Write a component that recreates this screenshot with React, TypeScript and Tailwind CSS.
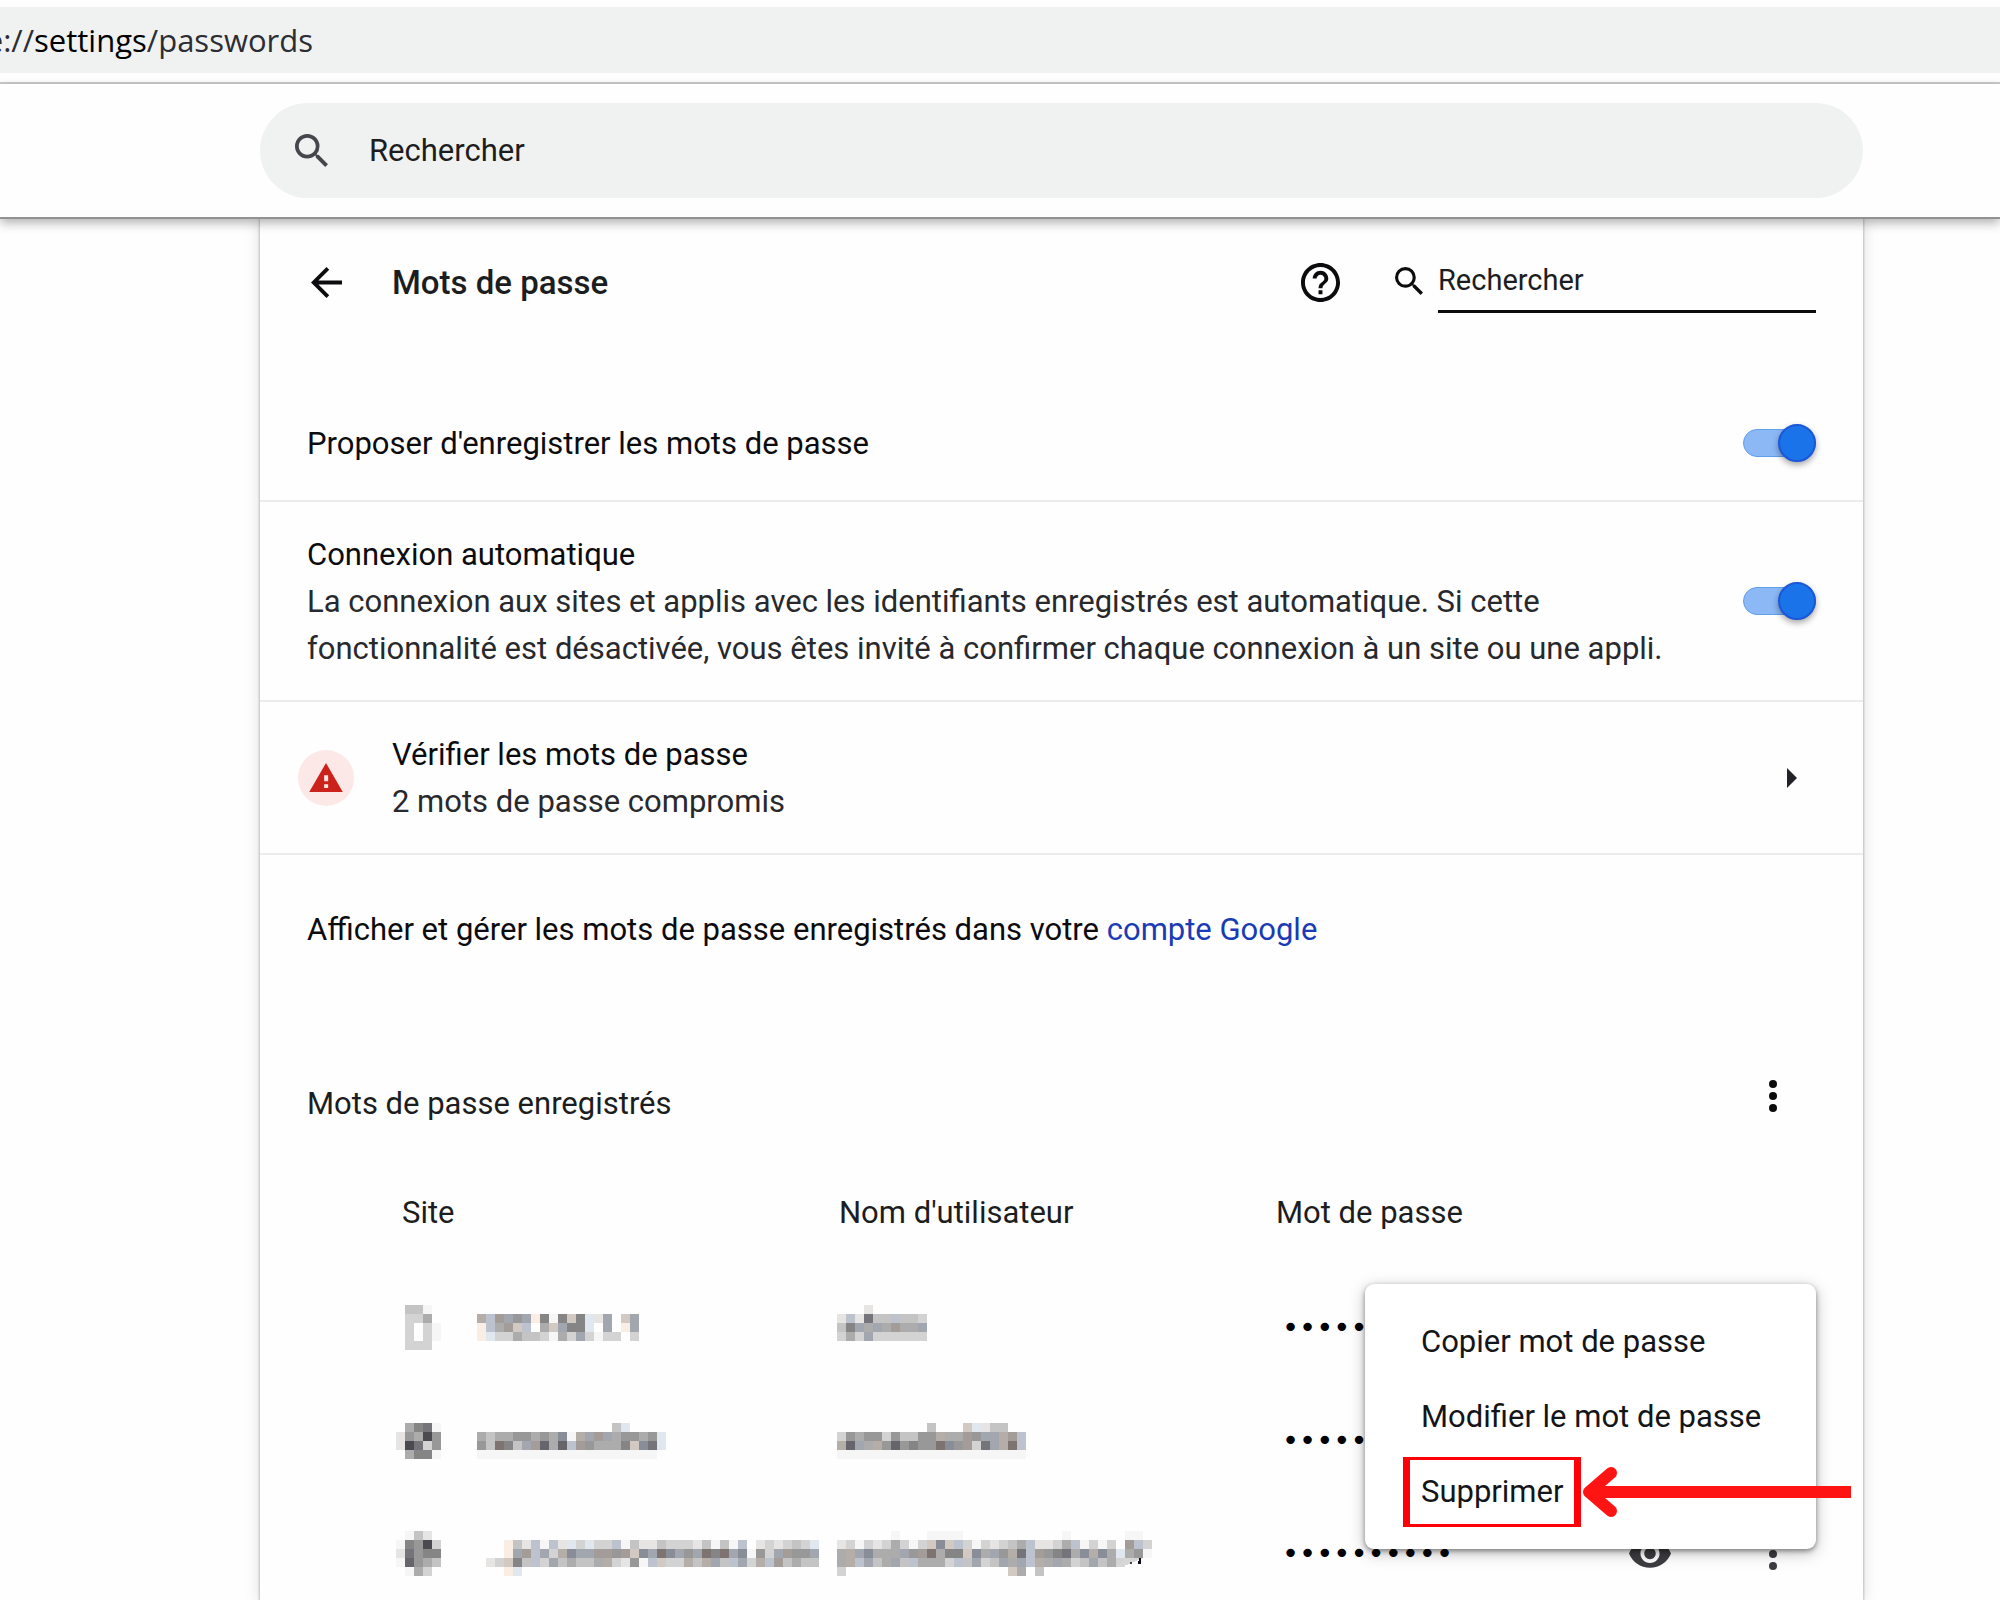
import { useState } from "react";
import type { ReactNode } from "react";

const CELL = 9;

const SHADES: Record<string, string> = {
  a: "#f6f6f6",
  b: "#e6e5e4",
  c: "#d3d3d4",
  d: "#c4c4c5",
  e: "#adacac",
  f: "#989898",
  g: "#858586",
  h: "#74747a",
  i: "#65656b",
  j: "#4a4a50",
  p: "#faeee4",
  q: "#d2c9c3",
  r: "#a39c98",
  s: "#7d7370",
  t: "#b5aea8",
  u: "#e0e7ef",
  v: "#bcc2ce",
  w: "#a2a6ae",
  x: "#898d97",
};

const entries = [
  {
    icon: [".dda.", ".cce.", ".c.ca", ".c.ca", ".ccc."],
    site: ["tvrwfwpgagqgubw.qw", "pverqv.eqwggu.w.pw", "pucceddcaecwcacc.c"],
    user: ["...b......", "bvbhddvddc", "dgwewereew", "cecwcccccc", ".........."],
  },
  {
    icon: [".egha", "bfejf", "bjhcf", ".egga"],
    site: ["...............du....", "edeeffefexatwrweffefu", "fdsgdwrieivrfeeegqxhu", "aaaaaaaaaaaaaaaaaaaa."],
    user: ["..........d...qubdd..", "cfeffcfddffteerfwwtrv", "tiwetfifgffsxfrchwtsv", "aaaaaaaaaaaaaaaaaaaaa"],
  },
  {
    icon: [".adb.", "agfjc", "bhfgg", "aifed", ".aec."],
    site: [
      "......................................",
      "...pdbvavbucuccvadbbdcccbdadav.bcbcdcu",
      "...pwrvwctxwwrrfrqxwsxwfwsgswxafcwrffw",
      ".bcqgdvcwdeddetcbfavqcctdtwdvwctvrdedd",
      "...pu.................................",
    ],
    user: [
      "......a...aaaa...........a......aa.",
      "bcacbcecacqxqvcacbcdevbbcevacac.rvc",
      "etwxeeewfrseggqxewfthvrfghextxeuefa",
      "etvwdewdveeecvdwcdwewvtewecdwdec...",
      "c..................qe.d............",
    ],
    stroke: true,
  },
];

function Mosaic({ rows, children }: { rows: string[]; children?: ReactNode }) {
  const width = rows[0].length * CELL;
  const height = rows.length * CELL;
  return (
    <svg width={width} height={height} shapeRendering="crispEdges" className="block shrink-0" aria-hidden="true">
      {rows.flatMap((row, y) =>
        row
          .split("")
          .map((c, x) =>
            c === "." ? null : (
              <rect key={`${x}-${y}`} x={x * CELL} y={y * CELL} width={CELL} height={CELL} fill={SHADES[c]} />
            )
          )
      )}
      {children}
    </svg>
  );
}

function SearchIcon({ className }: { className: string }) {
  return (
    <svg viewBox="3 3 17.5 17.5" className={className} fill="currentColor" aria-hidden="true">
      <path d="M15.5 14h-.79l-.28-.27A6.471 6.471 0 0 0 16 9.5 6.5 6.5 0 1 0 9.5 16c1.61 0 3.09-.59 4.23-1.57l.27.28v.79l5 4.99L20.49 19l-4.99-5zm-6 0C7.01 14 5 11.99 5 9.5S7.01 5 9.5 5 14 7.01 14 9.5 11.99 14 9.5 14z" />
    </svg>
  );
}

function KebabIcon() {
  return (
    <svg viewBox="0 0 10 34" className="h-[34px] w-[10px]" fill="currentColor" aria-hidden="true">
      <circle cx="5" cy="5" r="4" />
      <circle cx="5" cy="17" r="4" />
      <circle cx="5" cy="29" r="4" />
    </svg>
  );
}

function Toggle({ id }: { id: string }) {
  const [on, setOn] = useState(true);
  return (
    <span className="relative flex h-[38px] w-[73px] shrink-0 items-center">
      <input
        id={id}
        type="checkbox"
        role="switch"
        checked={on}
        onChange={() => setOn(!on)}
        className="peer h-7 w-full cursor-pointer appearance-none rounded-full border border-[#5f9ff0] bg-[#8cb8f5]"
      />
      <span className="pointer-events-none absolute left-0 size-[38px] rounded-full border-2 border-[#1b57d8] bg-[#1a73e8] shadow-[0_3px_6px_rgba(0,0,0,0.35)] peer-checked:left-[35px]" />
    </span>
  );
}

function PasswordRow({ entry, index }: { entry: (typeof entries)[number]; index: number }) {
  return (
    <tr className="h-[113px]">
      <td className="p-0">
        <div className="flex items-center gap-9">
          <Mosaic rows={entry.icon} />
          <Mosaic rows={entry.site} />
        </div>
      </td>
      <td className="p-0">
        <Mosaic rows={entry.user}>
          {entry.stroke && (
            <>
              <path d="M279 36 L288 27 H306 L285 36 Z" fill="#d6d6d6" />
              <path d="M302 27 H304 V33 H301 Z" fill="#0b0b1c" />
              <path d="M293 31 H295 V33 H293 Z" fill="#4a3550" />
            </>
          )}
        </Mosaic>
      </td>
      <td className="p-0">
        <input
          type="password"
          readOnly
          value="motdepasse"
          aria-label={`Mot de passe ${index + 1}`}
          className="block w-full bg-transparent pl-2 font-['DejaVu_Sans',sans-serif] text-[29px] leading-[47px] text-black outline-none"
        />
      </td>
      <td className="p-0">
        <div className="flex items-center justify-end gap-[97px] pr-[38px] text-[#3c3c41]">
          <button type="button" aria-label="Afficher le mot de passe">
            <svg viewBox="1 4.5 22 15" className="h-[29px] w-[42px]" fill="currentColor" aria-hidden="true">
              <path d="M12 4.5C7 4.5 2.73 7.61 1 12c1.73 4.39 6 7.5 11 7.5s9.27-3.11 11-7.5c-1.73-4.39-6-7.5-11-7.5zM12 17c-2.76 0-5-2.24-5-5s2.24-5 5-5 5 2.24 5 5-2.24 5-5 5zm0-8c-1.66 0-3 1.34-3 3s1.34 3 3 3 3-1.34 3-3-1.34-3-3-3z" />
            </svg>
          </button>
          <button type="button" aria-label="Autres actions">
            <KebabIcon />
          </button>
        </div>
      </td>
    </tr>
  );
}

function ActionMenu() {
  return (
    <div
      role="menu"
      className="absolute top-[13px] right-0 w-[451px] rounded-[9px] bg-white py-5 text-[31px] leading-[75px] text-[#141518] shadow-[0_2px_5px_rgba(0,0,0,0.4),0_4px_16px_rgba(0,0,0,0.25)]"
    >
      <button type="button" role="menuitem" className="block w-full pl-14 text-left">
        Copier mot de passe
      </button>
      <button type="button" role="menuitem" className="block w-full pl-14 text-left">
        Modifier le mot de passe
      </button>
      <div className="relative">
        <button type="button" role="menuitem" className="block w-full pl-14 text-left">
          Supprimer
        </button>
        <span className="pointer-events-none absolute top-[3px] left-[38px] h-[70px] w-[178px] border-x-[7px] border-y-[3px] border-[#ff0008]" />
        <svg
          viewBox="0 0 272 50"
          className="pointer-events-none absolute top-[13px] left-[214px] h-[50px] w-[272px]"
          fill="none"
          stroke="#ff1414"
          strokeWidth="12"
          aria-hidden="true"
        >
          <path d="M10 25H272" />
          <path d="M32 6L10 25L32 44" strokeLinecap="round" strokeLinejoin="round" />
        </svg>
      </div>
    </div>
  );
}

export default function App() {
  return (
    <div className="flex h-screen flex-col overflow-hidden bg-[#fefefe] font-['Roboto','Liberation_Sans',sans-serif] text-[31px] leading-[47px] text-[#0c0c0e]">
      <div className="border-b-2 border-[#cacaca] bg-[#fefefe] pt-[7px] pb-[9px]">
        <div className="h-[66px] bg-[#f0f2f1]">
          <div className="flex w-[313px] justify-end overflow-hidden font-['Open_Sans','Noto_Sans',sans-serif] text-[31px] leading-[66px] whitespace-nowrap text-[#2c2d33]">
            e://<span className="text-black">settings</span>/passwords
          </div>
        </div>
      </div>

      <header className="relative z-10 border-b-2 border-[#929292] bg-[#fefefe] pt-[19px] pr-[137px] pb-[19px] pl-[260px] shadow-[0_4px_10px_rgba(0,0,0,0.3)]">
        <label className="flex h-[95px] items-center gap-[41px] rounded-full bg-[#f0f2f1] pl-[35px]">
          <SearchIcon className="size-[33px] text-[#46474c]" />
          <input
            type="text"
            placeholder="Rechercher"
            aria-label="Rechercher dans les paramètres"
            className="min-w-0 flex-1 bg-transparent outline-none placeholder:text-[#1c1d20] placeholder:opacity-100"
          />
        </label>
      </header>

      <main className="flex flex-1 flex-col pr-[137px] pl-[260px]">
        <div className="flex-1 bg-[#fefefe] shadow-[0_0_2px_1px_rgba(0,0,0,0.2),0_0_14px_2px_rgba(0,0,0,0.1)]">
          <div className="flex h-[169px] items-start px-[47px] pt-10">
            <button type="button" aria-label="Retour" className="mt-2 ml-1">
              <svg viewBox="4 4 16 16" className="size-[31px]" fill="currentColor" aria-hidden="true">
                <path d="M20 11H7.83l5.59-5.59L12 4l-8 8 8 8 1.41-1.41L7.83 13H20v-2z" />
              </svg>
            </button>
            <h1 className="ml-[50px] flex-1 text-[33px] leading-[47px] font-medium text-[#1c1d20]">Mots de passe</h1>
            <button type="button" aria-label="Aide" className="mt-1">
              <svg viewBox="2 2 20 20" className="size-[39px]" fill="currentColor" aria-hidden="true">
                <path d="M11 18h2v-2h-2v2zm1-16C6.48 2 2 6.48 2 12s4.48 10 10 10 10-4.48 10-10S17.52 2 12 2zm0 18c-4.41 0-8-3.59-8-8s3.59-8 8-8 8 3.59 8 8-3.59 8-8 8zm0-14c-2.21 0-4 1.79-4 4h2c0-1.1.9-2 2-2s2 .9 2 2c0 2-3 1.75-3 5h2c0-2.25 3-2.5 3-5 0-2.21-1.79-4-4-4z" />
              </svg>
            </button>
            <label className="ml-[55px] flex items-start">
              <SearchIcon className="mt-2 mr-[15px] size-7" />
              <input
                type="text"
                placeholder="Rechercher"
                aria-label="Rechercher des mots de passe"
                className="h-[54px] w-[378px] border-b-[3px] border-[#0c0c0e] bg-transparent pb-[9px] text-[29px] leading-[42px] outline-none placeholder:text-[#1c1d20] placeholder:opacity-100"
              />
            </label>
          </div>

          <div className="flex h-[114px] items-center justify-between border-b-2 border-[#ececec] px-[47px] pb-[2px]">
            <label htmlFor="offer">Proposer d'enregistrer les mots de passe</label>
            <Toggle id="offer" />
          </div>

          <div className="flex h-[200px] items-center justify-between border-b-2 border-[#ececec] px-[47px]">
            <div>
              <label htmlFor="auto">Connexion automatique</label>
              <p className="text-[#28292d]">
                La connexion aux sites et applis avec les identifiants enregistrés est automatique. Si cette
                <br />
                fonctionnalité est désactivée, vous êtes invité à confirmer chaque connexion à un site ou une appli.
              </p>
            </div>
            <Toggle id="auto" />
          </div>

          <a href="#check" className="flex h-[153px] items-center border-b-2 border-[#ececec] pr-[66px] pl-[38px]">
            <span className="flex size-14 items-center justify-center rounded-full bg-[#fce8e6]">
              <svg viewBox="1 2 22 19" className="h-[29px] w-[34px]" aria-hidden="true">
                <path d="M1 21h22L12 2 1 21z" fill="#cb221b" />
                <path d="M10.8 10h2.6v4h-2.6zM10.8 16h2.6v2.4h-2.6z" fill="#fce8e6" />
              </svg>
            </span>
            <span className="ml-[38px] flex-1">
              <span className="block">Vérifier les mots de passe</span>
              <span className="block text-[#28292d]">2 mots de passe compromis</span>
            </span>
            <svg viewBox="0 0 10 20" className="h-5 w-[10px]" fill="#232327" aria-hidden="true">
              <path d="M0 0L10 10L0 20Z" />
            </svg>
          </a>

          <p className="px-[47px] pt-[51px]">
            Afficher et gérer les mots de passe enregistrés dans votre{" "}
            <a href="#account" className="text-[#1a3bb5]">
              compte Google
            </a>
          </p>

          <div className="flex items-center justify-between pt-[127px] pr-[85px] pl-[47px]">
            <h2 className="text-[#1c1d20]">Mots de passe enregistrés</h2>
            <button type="button" aria-label="Autres actions sur les mots de passe" className="-mt-4">
              <KebabIcon />
            </button>
          </div>

          <div className="pt-[27px] pr-[47px] pl-[136px]">
            <table className="w-full table-fixed border-collapse text-left">
              <thead>
                <tr className="h-[117px] text-[#1c1d20]">
                  <th className="w-[441px] p-0 pl-1.5 font-normal">Site</th>
                  <th className="w-[437px] p-0 pl-0.5 font-normal">Nom d'utilisateur</th>
                  <th className="p-0 pl-0.5 font-normal">Mot de passe</th>
                  <td className="w-[240px] p-0" />
                </tr>
              </thead>
              <tbody>
                {entries.map((entry, i) => (
                  <PasswordRow key={i} entry={entry} index={i} />
                ))}
              </tbody>
            </table>
            {/* the menu hangs from the first row's action button */}
            <div className="relative -mt-[339px]">
              <ActionMenu />
            </div>
          </div>
        </div>
      </main>
    </div>
  );
}
